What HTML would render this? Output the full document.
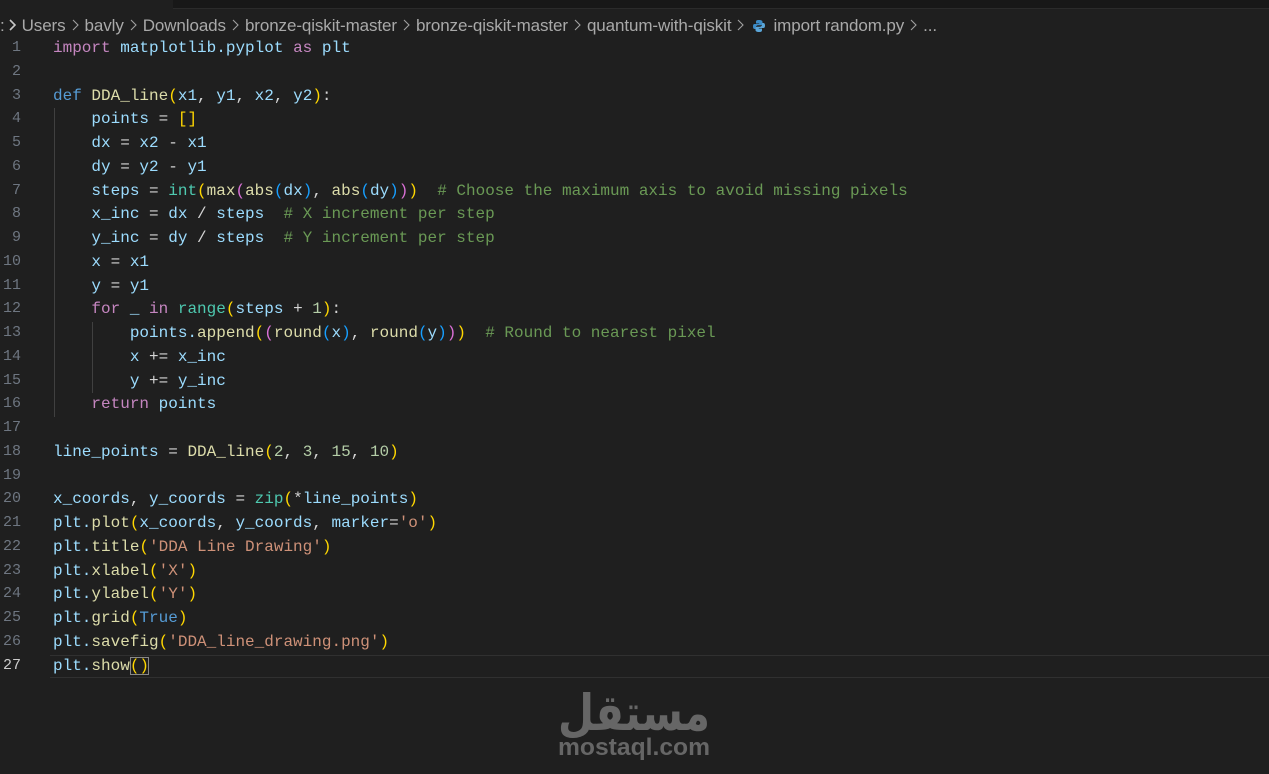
<!DOCTYPE html>
<html><head><meta charset="utf-8">
<style>
html,body{margin:0;padding:0;}
body{width:1269px;height:774px;background:#1f1f1f;position:relative;overflow:hidden;font-family:"Liberation Mono",monospace;}
.topbar{position:absolute;left:173px;top:0;width:1096px;height:8px;background:#181818;border-bottom:1px solid #2b2b2b;}
.crumb{position:absolute;left:0;top:16px;height:22px;font-family:"Liberation Sans",sans-serif;font-size:17px;color:#a9a9a9;white-space:nowrap;letter-spacing:-0.1px;}
.crumb svg.ch{margin:0 6px 0 6px;vertical-align:0px}
.ln{position:absolute;left:0;width:21px;text-align:right;font-size:15px;color:#6e7681;height:24px;line-height:24px;}
.code{position:absolute;left:53px;font-size:16px;white-space:pre;height:24px;line-height:24px;color:#9cdcfe;}
.cur{position:absolute;left:50px;top:655px;width:1219px;height:21px;border-top:1px solid #303030;border-bottom:1px solid #303030;}
.guide{position:absolute;width:1px;background:#404040;}
.k{color:#c586c0}.d{color:#569cd6}.f{color:#dcdcaa}.v{color:#9cdcfe}.c{color:#6a9955}.s1{color:#ce9178}.n{color:#b5cea8}.b{color:#4ec9b0}.o{color:#d4d4d4}
.g{color:#ffd700}.p{color:#da70d6}.u{color:#179fff}
.wm{position:absolute;left:550px;top:680px;}
</style></head><body>
<div class="topbar"></div>
<div class="crumb">:<svg class="ch" width="7" height="12" viewBox="0 0 7 12" style="margin-left:4px"><path d="M1 1l5 5-5 5" stroke="#c8c8c8" stroke-width="1.6" fill="none"/></svg>Users<svg class="ch" width="7" height="12" viewBox="0 0 7 12"><path d="M1 1l5 5-5 5" stroke="#a0a0a0" stroke-width="1.1" fill="none"/></svg>bavly<svg class="ch" width="7" height="12" viewBox="0 0 7 12"><path d="M1 1l5 5-5 5" stroke="#a0a0a0" stroke-width="1.1" fill="none"/></svg>Downloads<svg class="ch" width="7" height="12" viewBox="0 0 7 12"><path d="M1 1l5 5-5 5" stroke="#a0a0a0" stroke-width="1.1" fill="none"/></svg>bronze-qiskit-master<svg class="ch" width="7" height="12" viewBox="0 0 7 12"><path d="M1 1l5 5-5 5" stroke="#a0a0a0" stroke-width="1.1" fill="none"/></svg>bronze-qiskit-master<svg class="ch" width="7" height="12" viewBox="0 0 7 12"><path d="M1 1l5 5-5 5" stroke="#a0a0a0" stroke-width="1.1" fill="none"/></svg>quantum-with-qiskit<svg class="ch" width="7" height="12" viewBox="0 0 7 12"><path d="M1 1l5 5-5 5" stroke="#a0a0a0" stroke-width="1.1" fill="none"/></svg><svg width="14" height="14" viewBox="0 0 14 14" style="vertical-align:-2px;margin:0 7px 0 2px"><path d="M7 1C4 1 4 2 4 3v1.5h3.2V5H2.5C1.2 5 1 6.5 1 7.5S1.3 10 2.5 10H4V8.2C4 7 5 6.3 6 6.3h3c1 0 1.5-.6 1.5-1.5V3C10.5 1.8 9.5 1 7 1z" fill="#3c8bc6"/><path d="M7 13c3 0 3-1 3-2V9.5H6.8V9h4.7c1.3 0 1.5-1.5 1.5-2.5S12.7 4 11.5 4H10v1.8C10 7 9 7.7 8 7.7H5c-1 0-1.5.6-1.5 1.5V11C3.5 12.200 4.5 13 7 13z" fill="#5aa5d8"/></svg>import random.py<svg class="ch" width="7" height="12" viewBox="0 0 7 12"><path d="M1 1l5 5-5 5" stroke="#a0a0a0" stroke-width="1.1" fill="none"/></svg>...</div>

<div class="cur"></div>
<div class="guide" style="left:54px;top:108px;height:309px"></div>
<div class="guide" style="left:92px;top:322px;height:71px"></div>

<div class="ln" style="top:36px">1</div><div class="code" style="top:36px"><span class="k">import</span> <span class="v">matplotlib.pyplot</span> <span class="k">as</span> <span class="v">plt</span></div>
<div class="ln" style="top:60px">2</div>
<div class="ln" style="top:84px">3</div><div class="code" style="top:84px"><span class="d">def</span> <span class="f">DDA_line</span><span class="g">(</span>x1<span class="o">,</span> y1<span class="o">,</span> x2<span class="o">,</span> y2<span class="g">)</span><span class="o">:</span></div>
<div class="ln" style="top:107px">4</div><div class="code" style="top:107px">    points <span class="o">=</span> <span class="g">[]</span></div>
<div class="ln" style="top:131px">5</div><div class="code" style="top:131px">    dx <span class="o">=</span> x2 <span class="o">-</span> x1</div>
<div class="ln" style="top:155px">6</div><div class="code" style="top:155px">    dy <span class="o">=</span> y2 <span class="o">-</span> y1</div>
<div class="ln" style="top:179px">7</div><div class="code" style="top:179px">    steps <span class="o">=</span> <span class="b">int</span><span class="g">(</span><span class="f">max</span><span class="p">(</span><span class="f">abs</span><span class="u">(</span>dx<span class="u">)</span><span class="o">,</span> <span class="f">abs</span><span class="u">(</span>dy<span class="u">)</span><span class="p">)</span><span class="g">)</span>  <span class="c"># Choose the maximum axis to avoid missing pixels</span></div>
<div class="ln" style="top:202px">8</div><div class="code" style="top:202px">    x_inc <span class="o">=</span> dx <span class="o">/</span> steps  <span class="c"># X increment per step</span></div>
<div class="ln" style="top:226px">9</div><div class="code" style="top:226px">    y_inc <span class="o">=</span> dy <span class="o">/</span> steps  <span class="c"># Y increment per step</span></div>
<div class="ln" style="top:250px">10</div><div class="code" style="top:250px">    x <span class="o">=</span> x1</div>
<div class="ln" style="top:274px">11</div><div class="code" style="top:274px">    y <span class="o">=</span> y1</div>
<div class="ln" style="top:297px">12</div><div class="code" style="top:297px">    <span class="k">for</span> _ <span class="k">in</span> <span class="b">range</span><span class="g">(</span>steps <span class="o">+</span> <span class="n">1</span><span class="g">)</span><span class="o">:</span></div>
<div class="ln" style="top:321px">13</div><div class="code" style="top:321px">        points.<span class="f">append</span><span class="g">(</span><span class="p">(</span><span class="f">round</span><span class="u">(</span>x<span class="u">)</span><span class="o">,</span> <span class="f">round</span><span class="u">(</span>y<span class="u">)</span><span class="p">)</span><span class="g">)</span>  <span class="c"># Round to nearest pixel</span></div>
<div class="ln" style="top:345px">14</div><div class="code" style="top:345px">        x <span class="o">+=</span> x_inc</div>
<div class="ln" style="top:369px">15</div><div class="code" style="top:369px">        y <span class="o">+=</span> y_inc</div>
<div class="ln" style="top:392px">16</div><div class="code" style="top:392px">    <span class="k">return</span> points</div>
<div class="ln" style="top:416px">17</div>
<div class="ln" style="top:440px">18</div><div class="code" style="top:440px">line_points <span class="o">=</span> <span class="f">DDA_line</span><span class="g">(</span><span class="n">2</span><span class="o">,</span> <span class="n">3</span><span class="o">,</span> <span class="n">15</span><span class="o">,</span> <span class="n">10</span><span class="g">)</span></div>
<div class="ln" style="top:464px">19</div>
<div class="ln" style="top:487px">20</div><div class="code" style="top:487px">x_coords<span class="o">,</span> y_coords <span class="o">=</span> <span class="b">zip</span><span class="g">(</span><span class="o">*</span>line_points<span class="g">)</span></div>
<div class="ln" style="top:511px">21</div><div class="code" style="top:511px">plt.<span class="f">plot</span><span class="g">(</span>x_coords<span class="o">,</span> y_coords<span class="o">,</span> marker<span class="o">=</span><span class="s1">'o'</span><span class="g">)</span></div>
<div class="ln" style="top:535px">22</div><div class="code" style="top:535px">plt.<span class="f">title</span><span class="g">(</span><span class="s1">'DDA Line Drawing'</span><span class="g">)</span></div>
<div class="ln" style="top:559px">23</div><div class="code" style="top:559px">plt.<span class="f">xlabel</span><span class="g">(</span><span class="s1">'X'</span><span class="g">)</span></div>
<div class="ln" style="top:582px">24</div><div class="code" style="top:582px">plt.<span class="f">ylabel</span><span class="g">(</span><span class="s1">'Y'</span><span class="g">)</span></div>
<div class="ln" style="top:606px">25</div><div class="code" style="top:606px">plt.<span class="f">grid</span><span class="g">(</span><span class="d">True</span><span class="g">)</span></div>
<div class="ln" style="top:630px">26</div><div class="code" style="top:630px">plt.<span class="f">savefig</span><span class="g">(</span><span class="s1">'DDA_line_drawing.png'</span><span class="g">)</span></div>
<div class="ln" style="top:654px;color:#cccccc">27</div><div class="code" style="top:654px">plt.<span class="f">show</span><span class="g" style="outline:1px solid #888;outline-offset:-1px">()</span></div>

<svg class="wm" width="180" height="90" viewBox="0 0 180 90">
<text x="8" y="50" textLength="152" lengthAdjust="spacingAndGlyphs" font-family="Noto Sans CJK SC, DejaVu Sans, sans-serif" font-weight="bold" font-size="50" fill="#666">مستقل</text>
<text x="8" y="75" textLength="152" lengthAdjust="spacingAndGlyphs" font-family="Liberation Sans, sans-serif" font-weight="bold" font-size="24" fill="#666">mostaql.com</text>
</svg>
</body></html>
